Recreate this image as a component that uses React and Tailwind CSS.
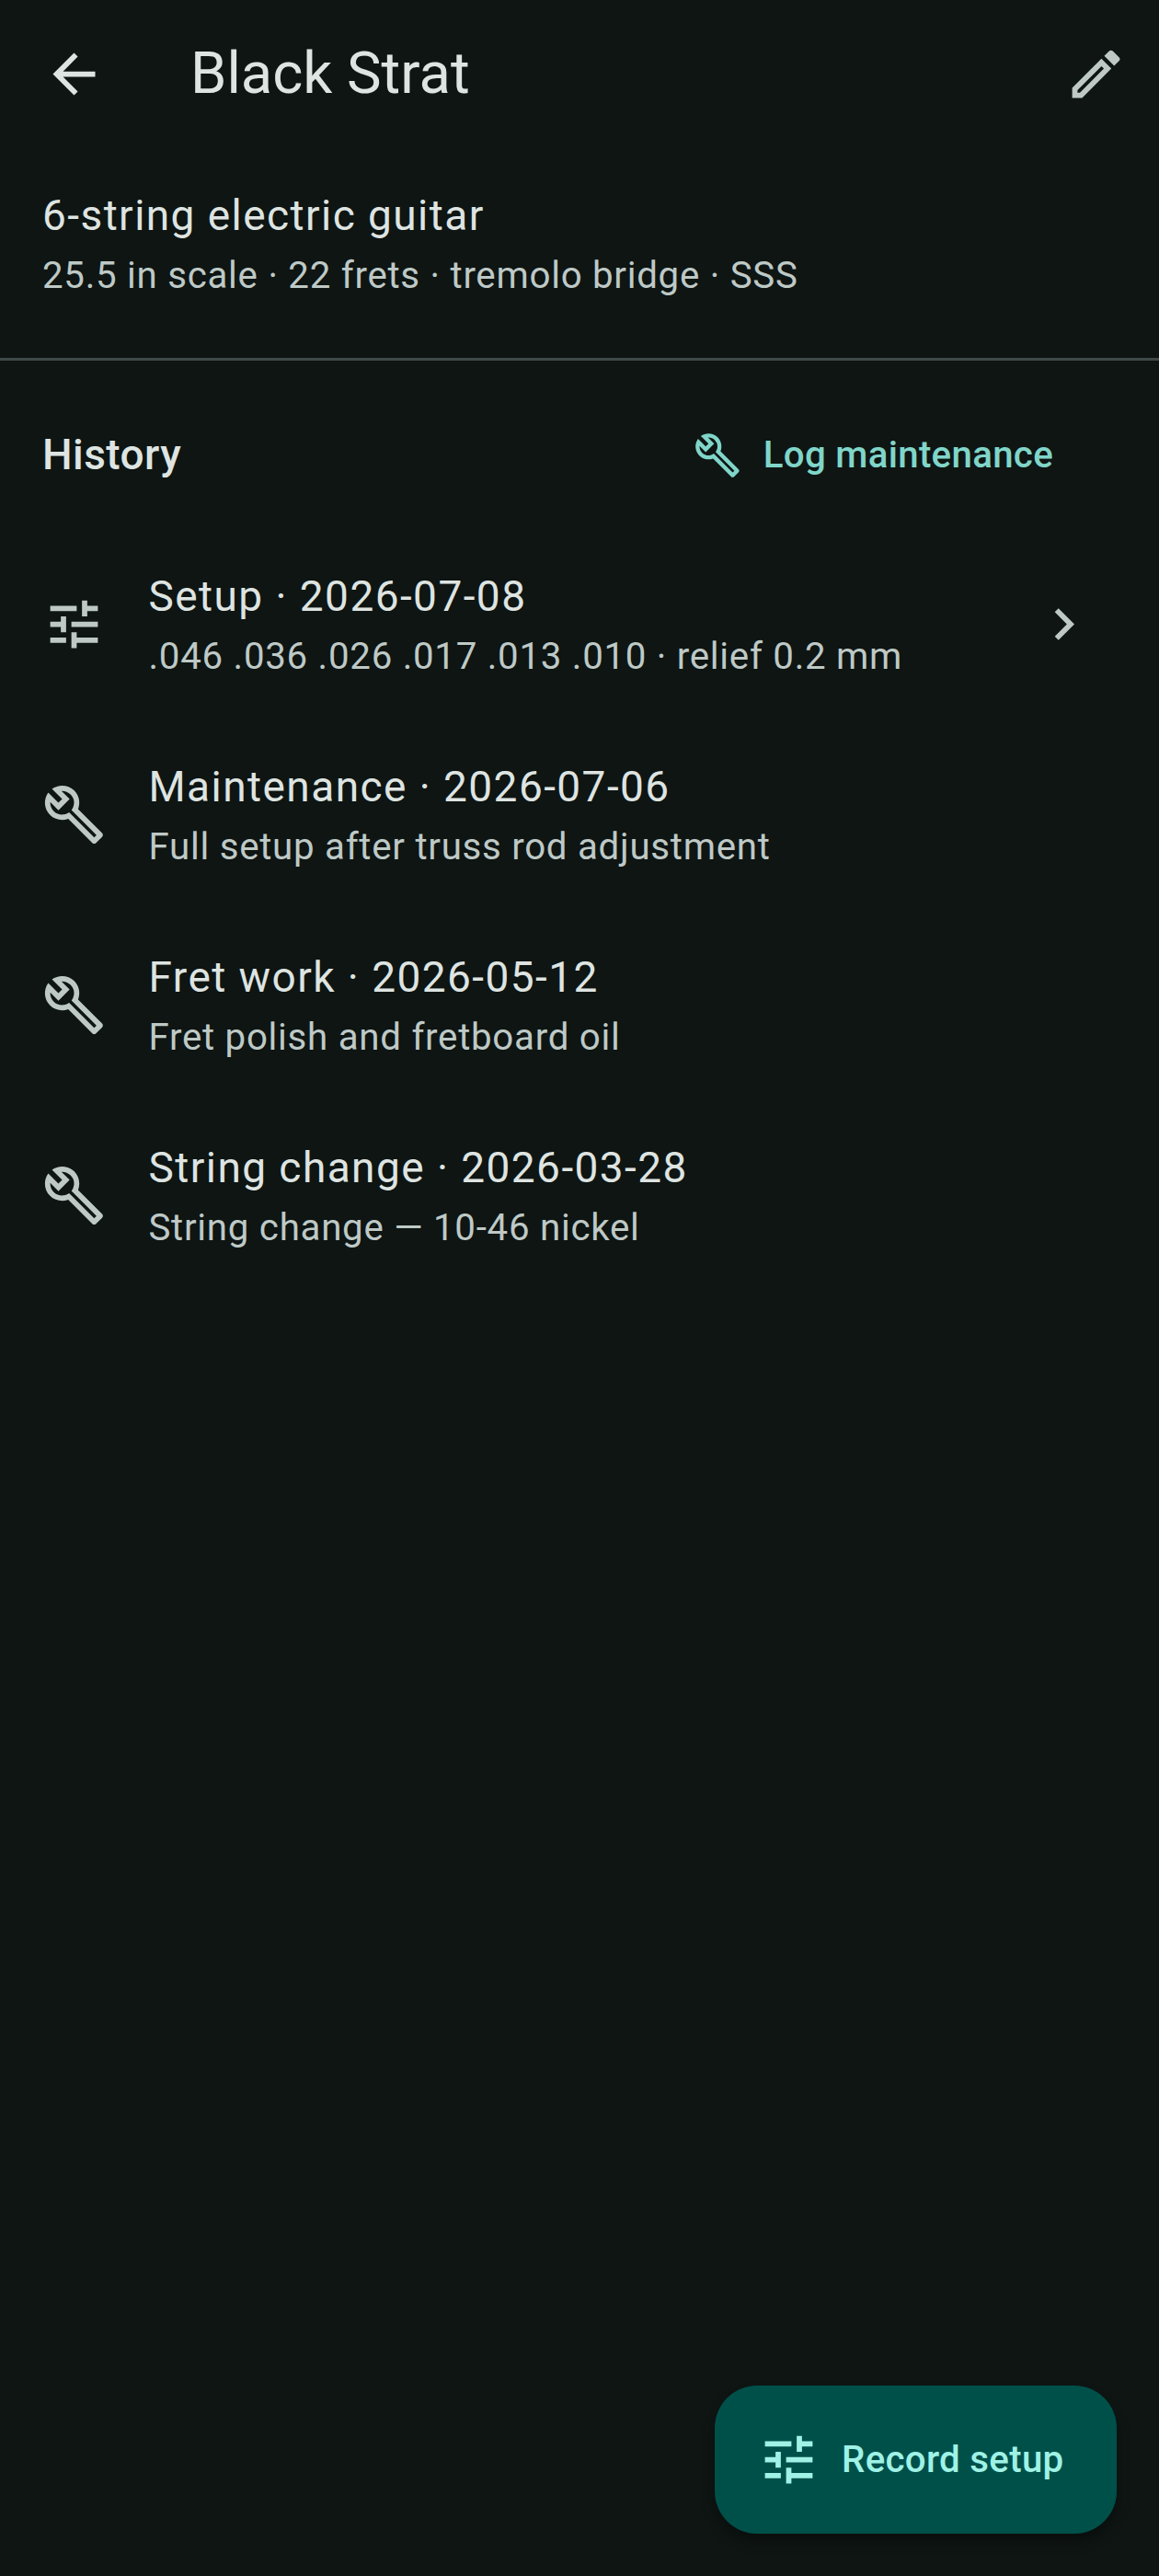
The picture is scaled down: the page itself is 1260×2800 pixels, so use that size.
import React from 'react';
import { MdArrowBack, MdChevronRight, MdOutlineBuild, MdOutlineEdit, MdOutlineTune } from 'react-icons/md';

const history = [
  { icon: MdOutlineTune, title: 'Setup · 2026-07-08', detail: '.046 .036 .026 .017 .013 .010 · relief 0.2 mm', chevron: true },
  { icon: MdOutlineBuild, title: 'Maintenance · 2026-07-06', detail: 'Full setup after truss rod adjustment' },
  { icon: MdOutlineBuild, title: 'Fret work · 2026-05-12', detail: 'Fret polish and fretboard oil' },
  { icon: MdOutlineBuild, title: 'String change · 2026-03-28', detail: 'String change — 10-46 nickel' },
];

function HistoryRow({ item }) {
  const Icon = item.icon;
  return (
    <div className="flex items-center h-[207px] pl-[46px] pr-[69px]">
      <Icon className="w-[69px] h-[69px] shrink-0 text-[#bec9c6]" />
      <div className="ml-[46.5px] flex-1 min-w-0">
        <div className="text-[46px] leading-[69px] tracking-[1.44px] text-[#dee4e1]">{item.title}</div>
        <div className="mt-[2px] text-[40.25px] leading-[57.5px] tracking-[0.72px] text-[#bec9c6]">{item.detail}</div>
      </div>
      {item.chevron && <MdChevronRight className="w-[69px] h-[69px] shrink-0 text-[#bec9c6]" />}
    </div>
  );
}

export default function App() {
  return (
    <div className="relative min-h-[2800px] bg-[#0e1513] font-['Roboto',sans-serif] overflow-hidden">
      <header className="flex items-center h-[161px] px-[11.5px]">
        <button className="flex items-center justify-center w-[138px] h-[138px] text-[#dee4e1]">
          <MdArrowBack className="w-[69px] h-[69px]" />
        </button>
        <h1 className="ml-[57.5px] pb-[3px] flex-1 text-[63.25px] leading-[80px] text-[#dee4e1]">Black Strat</h1>
        <button className="flex items-center justify-center w-[138px] h-[138px] -mr-[11.5px] text-[#bec9c6]">
          <MdOutlineEdit className="w-[69px] h-[69px]" />
        </button>
      </header>

      <section className="px-[46px] pt-[39px] pb-[60px] border-b-[3px] border-[#3f4947]">
        <div className="text-[46px] leading-[69px] tracking-[1.44px] text-[#dee4e1]">6-string electric guitar</div>
        <div className="mt-[2px] text-[40.25px] leading-[57.5px] tracking-[0.72px] text-[#bec9c6]">25.5 in scale · 22 frets · tremolo bridge · SSS</div>
      </section>

      <div className="flex items-center justify-between h-[183px] pt-[22px] pl-[46px] pr-[115px]">
        <h2 className="text-[46px] font-medium tracking-[0.43px] text-[#dee4e1]">History</h2>
        <button className="flex items-center gap-[24px] pt-[2px] text-[40.25px] font-medium tracking-[0.29px] text-[#80d5c9]">
          <MdOutlineBuild className="w-[52px] h-[52px]" />
          Log maintenance
        </button>
      </div>

      <div>
        {history.map((item) => (
          <HistoryRow key={item.title} item={item} />
        ))}
      </div>

      <button className="absolute right-[46px] bottom-[46.5px] flex items-center h-[161px] pl-[46px] pr-[57.5px] rounded-[46px] bg-[#00504a] text-[#9ff2e5] shadow-[0_9px_14px_rgba(0,0,0,0.3)]">
        <MdOutlineTune className="w-[69px] h-[69px]" />
        <span className="ml-[23px] pt-[2px] text-[40.25px] font-medium tracking-[0.29px]">Record setup</span>
      </button>
    </div>
  );
}
